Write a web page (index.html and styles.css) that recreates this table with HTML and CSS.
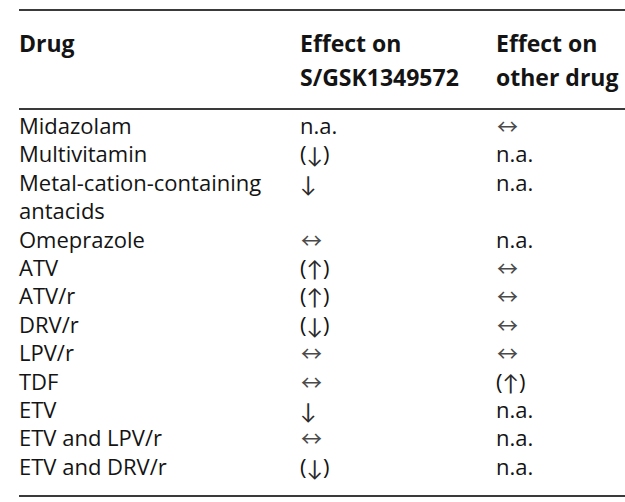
FILE: index.html
```html
<!DOCTYPE html>
<html>
<head>
<meta charset="utf-8">
<link rel="stylesheet" href="styles.css">
</head>
<body>
<table class="dt">
  <thead>
    <tr>
      <th class="c1">Drug</th>
      <th class="c2">Effect on<br>S/GSK1349572</th>
      <th class="c3">Effect on<br>other drug</th>
    </tr>
  </thead>
  <tbody>
    <tr class="first"><td>Midazolam</td><td>n.a.</td><td><span class="lr">↔</span></td></tr>
    <tr><td>Multivitamin</td><td>(<span class="ud">↓</span>)</td><td>n.a.</td></tr>
    <tr><td>Metal-cation-containing<br>antacids</td><td><span class="ud">↓</span></td><td>n.a.</td></tr>
    <tr><td>Omeprazole</td><td><span class="lr">↔</span></td><td>n.a.</td></tr>
    <tr><td>ATV</td><td>(<span class="ud">↑</span>)</td><td><span class="lr">↔</span></td></tr>
    <tr><td>ATV/r</td><td>(<span class="ud">↑</span>)</td><td><span class="lr">↔</span></td></tr>
    <tr><td>DRV/r</td><td>(<span class="ud">↓</span>)</td><td><span class="lr">↔</span></td></tr>
    <tr><td>LPV/r</td><td><span class="lr">↔</span></td><td><span class="lr">↔</span></td></tr>
    <tr><td>TDF</td><td><span class="lr">↔</span></td><td>(<span class="ud">↑</span>)</td></tr>
    <tr><td>ETV</td><td><span class="ud">↓</span></td><td>n.a.</td></tr>
    <tr><td>ETV and LPV/r</td><td><span class="lr">↔</span></td><td>n.a.</td></tr>
    <tr class="last"><td>ETV and DRV/r</td><td>(<span class="ud">↓</span>)</td><td>n.a.</td></tr>
  </tbody>
</table>
</body>
</html>
```
FILE: styles.css
```css
html, body {
  margin: 0;
  padding: 0;
  background: #ffffff;
  overflow: hidden;
}
body {
  padding: 9px 0 0 19px;
  font-family: "Open Sans", "DejaVu Sans", sans-serif;
  color: #141414;
}
.dt {
  border-collapse: collapse;
  width: 606px;
  border-top: 2px solid #3a3a3a;
  border-bottom: 2px solid #3a3a3a;
}
.dt th {
  text-align: left;
  font-weight: 700;
  font-size: 23px;
  line-height: 34px;
  vertical-align: top;
  padding: 15px 0 14px 0;
  border-bottom: 2px solid #3a3a3a;
  white-space: nowrap;
}
.c1 { width: 281px; }
.c2 { width: 196px; }
.dt td {
  font-size: 22px;
  line-height: 28.4px;
  padding: 0;
  vertical-align: top;
  white-space: nowrap;
}
.first td { padding-top: 1px; }
.last td { padding-bottom: 15px; }
.lr {
  font-family: "Noto Sans CJK JP", "Lato", sans-serif;
  line-height: 1;
  font-size: 21px;
  color: #4a4a4a;
  margin-left: 1px;
}
.ud {
  font-family: "Lato", "Noto Sans CJK JP", sans-serif;
  line-height: 1;
  font-size: 22px;
  color: #2a2a2a;
  position: relative;
  top: 1px;
}
```
